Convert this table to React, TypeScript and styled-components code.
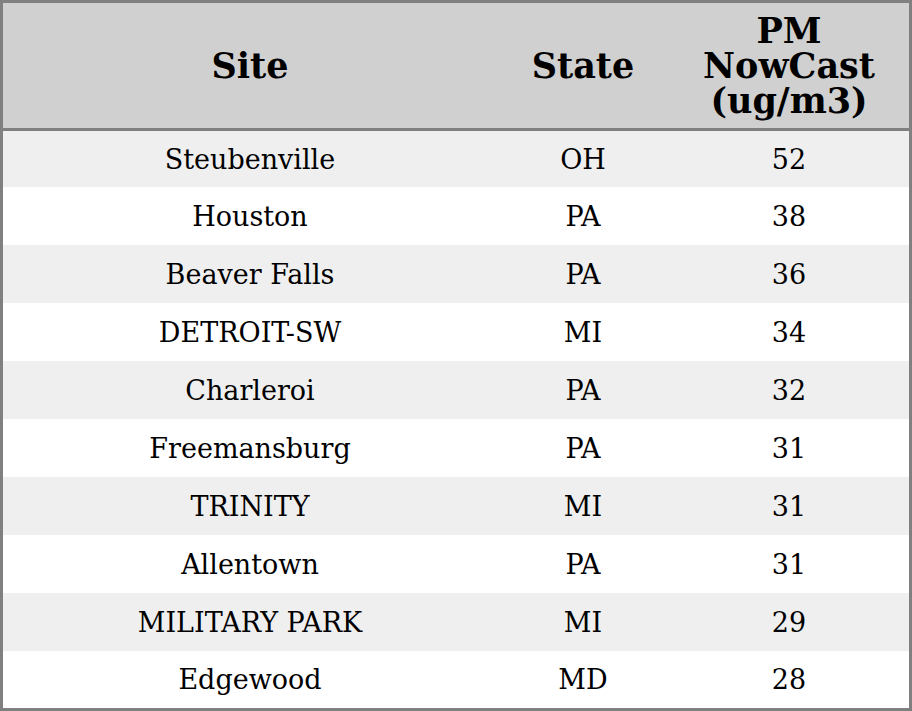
import React from "react";
import styled, { createGlobalStyle } from "styled-components";

const GlobalStyle = createGlobalStyle`
  html, body {
    margin: 0;
    padding: 0;
    background: #ffffff;
  }
`;

const Table = styled.table`
  width: 912px;
  table-layout: fixed;
  border-collapse: separate;
  border-spacing: 0;
  border: 3px solid #808080;
  font-family: "DejaVu Serif", "Liberation Serif", serif;
  color: #000;
`;

const HeadCell = styled.th`
  height: 125px;
  padding: 0 4px;
  background: #d0d0d0;
  border-bottom: 3px solid #808080;
  font-size: 35px;
  font-weight: bold;
  line-height: 35px;
  text-align: center;
  vertical-align: middle;
`;

const Row = styled.tr<{ $striped: boolean }>`
  height: 58px;
  background: ${(p) => (p.$striped ? "#efefef" : "#ffffff")};

  &:first-child {
    height: 56px;
  }
  &:last-child {
    height: 57px;
  }
`;

const Cell = styled.td`
  padding: 0 4px;
  font-size: 27px;
  text-align: center;
  vertical-align: middle;
  white-space: nowrap;
`;

const rows: [string, string, number][] = [
  ["Steubenville", "OH", 52],
  ["Houston", "PA", 38],
  ["Beaver Falls", "PA", 36],
  ["DETROIT-SW", "MI", 34],
  ["Charleroi", "PA", 32],
  ["Freemansburg", "PA", 31],
  ["TRINITY", "MI", 31],
  ["Allentown", "PA", 31],
  ["MILITARY PARK", "MI", 29],
  ["Edgewood", "MD", 28],
];

export default function App() {
  return (
    <>
      <GlobalStyle />
      <Table>
        <colgroup>
          <col style={{ width: 494 }} />
          <col style={{ width: 172 }} />
          <col style={{ width: 240 }} />
        </colgroup>
        <thead>
          <tr>
            <HeadCell>Site</HeadCell>
            <HeadCell>State</HeadCell>
            <HeadCell>
              PM
              <br />
              NowCast
              <br />
              (ug/m3)
            </HeadCell>
          </tr>
        </thead>
        <tbody>
          {rows.map(([site, state, value], i) => (
            <Row key={site} $striped={i % 2 === 0}>
              <Cell>{site}</Cell>
              <Cell>{state}</Cell>
              <Cell>{value}</Cell>
            </Row>
          ))}
        </tbody>
      </Table>
    </>
  );
}
